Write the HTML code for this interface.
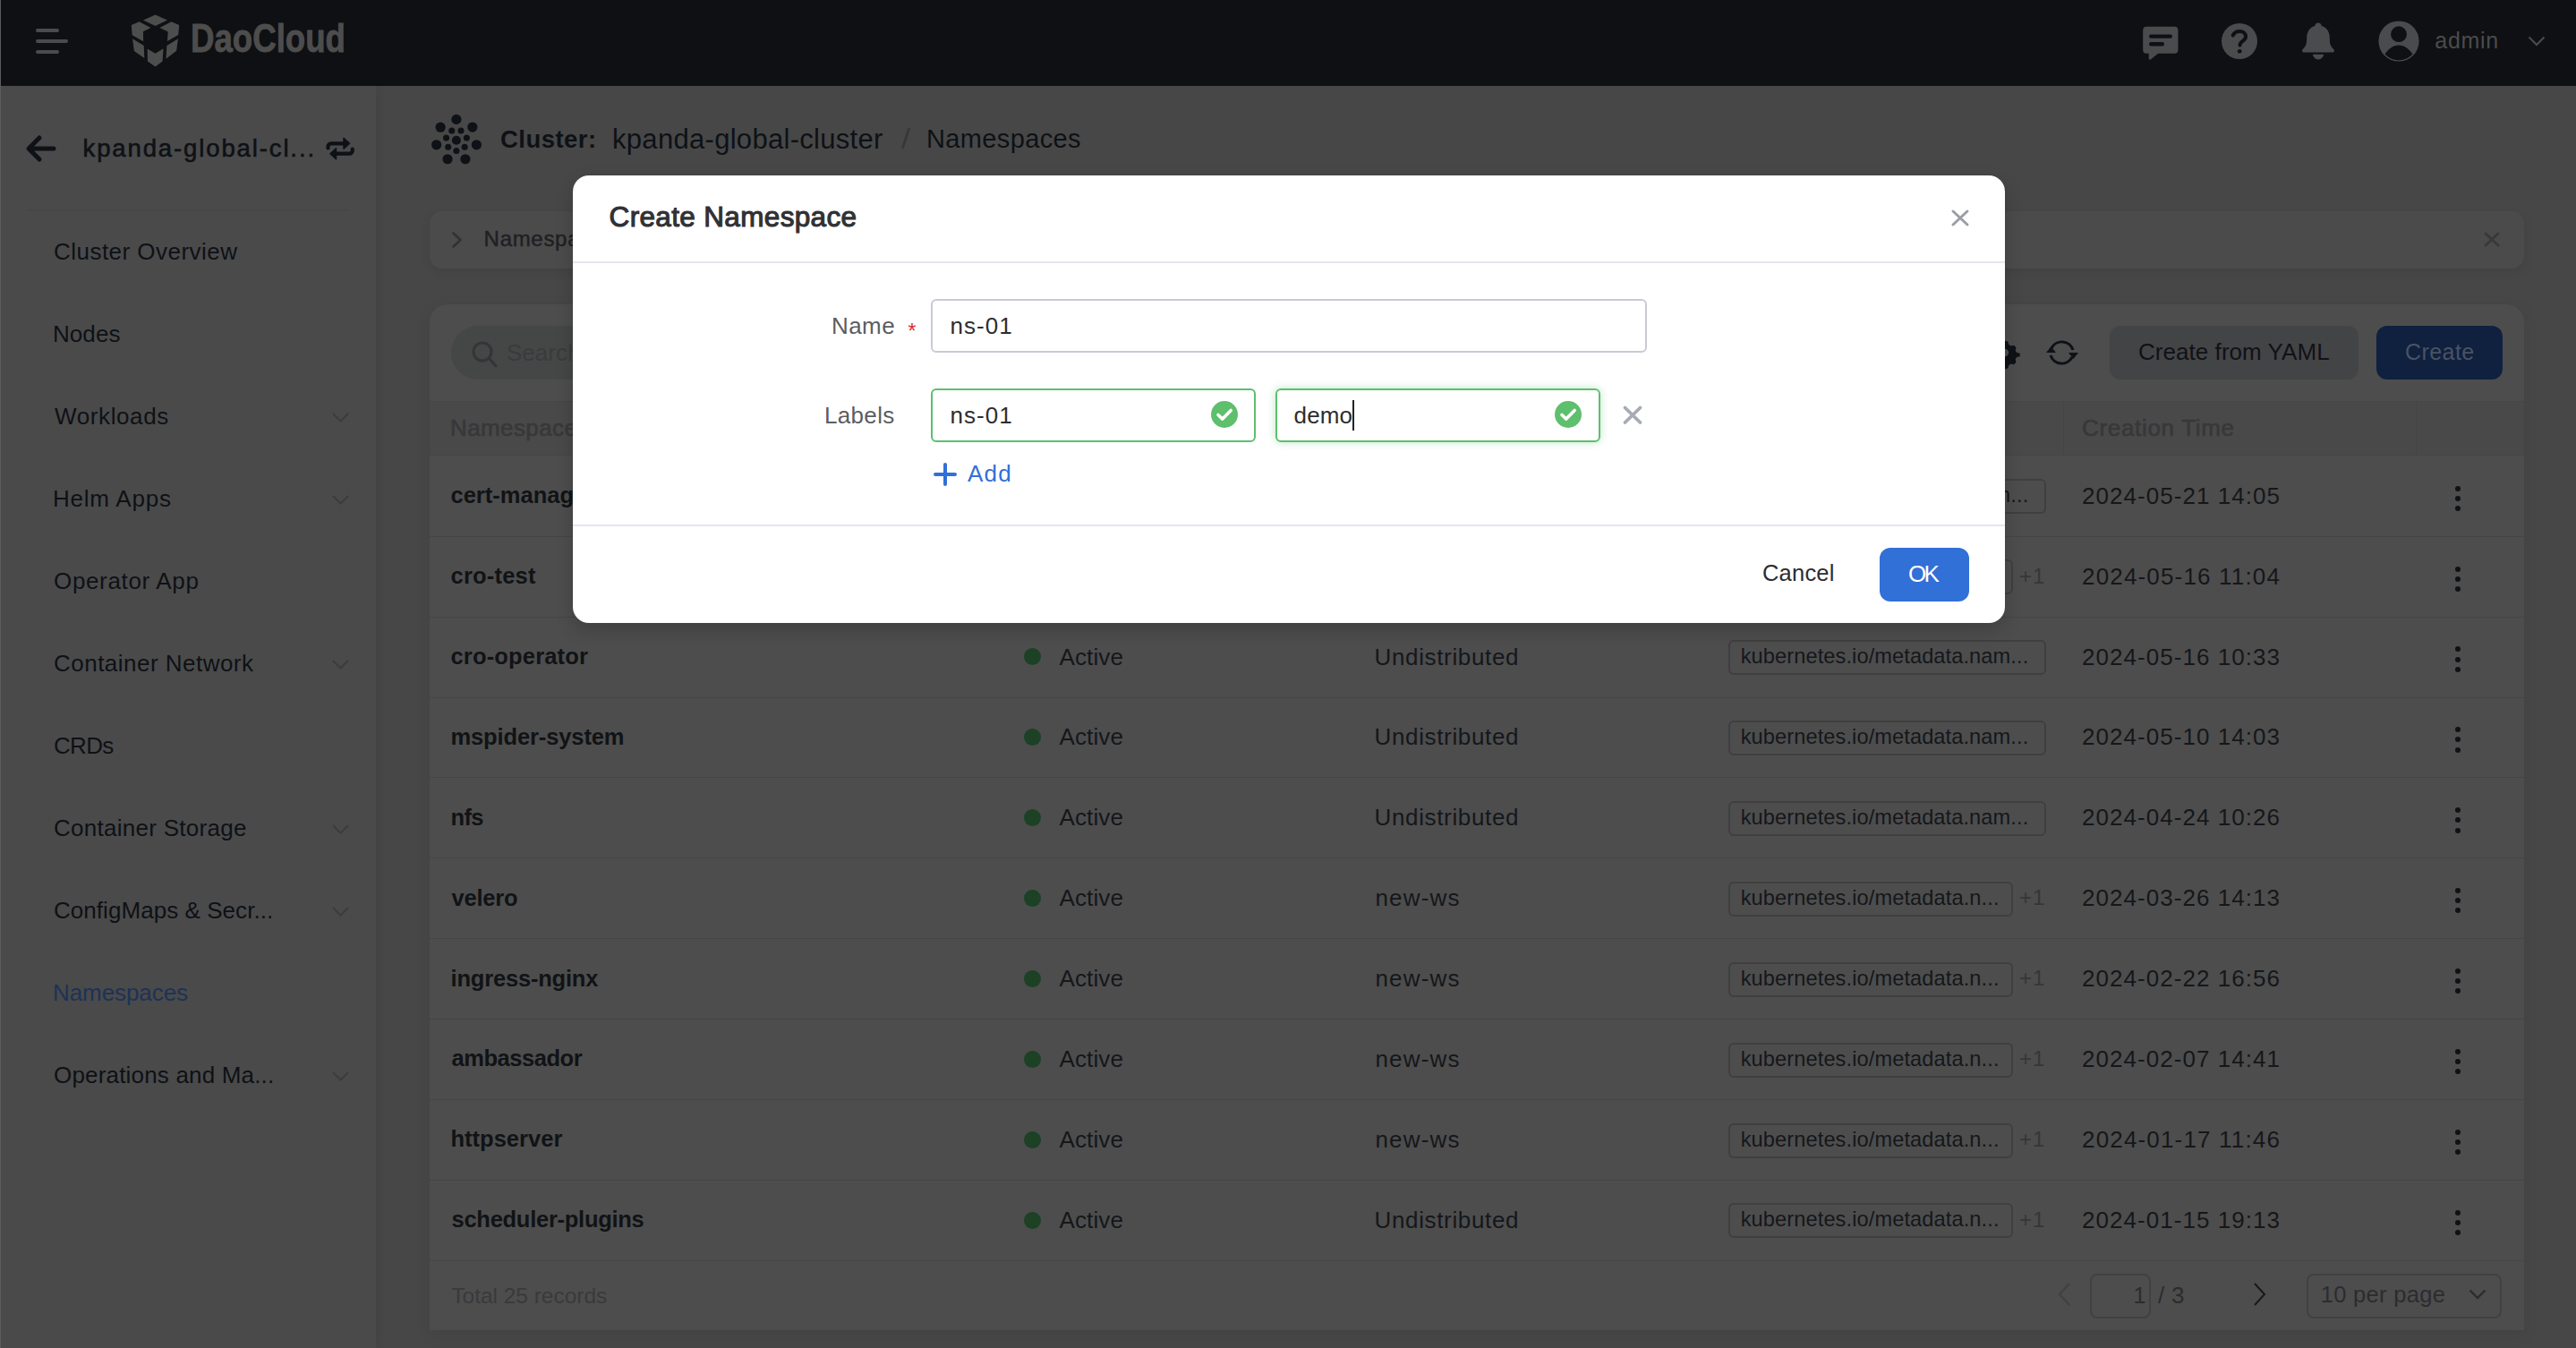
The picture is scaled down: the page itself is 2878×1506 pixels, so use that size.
<!DOCTYPE html>
<html><head><meta charset="utf-8"><style>
html,body{margin:0;padding:0}
body{width:2878px;height:1506px;overflow:hidden;position:relative;font-family:"Liberation Sans", sans-serif;background:#474747}
.a{position:absolute}
.t{position:absolute;white-space:nowrap;line-height:1}
svg{overflow:visible}
</style></head><body>
<div class="a" style="left:0px;top:0px;width:2878px;height:96px;background:#0f1013"></div>
<div class="a" style="left:40px;top:32px;width:26px;height:4px;background:#4a4b4d;border-radius:2px"></div>
<div class="a" style="left:40px;top:44px;width:36px;height:4px;background:#4a4b4d;border-radius:2px"></div>
<div class="a" style="left:40px;top:56px;width:26px;height:4px;background:#4a4b4d;border-radius:2px"></div>
<svg class="a" style="left:140px;top:10px" width="70" height="70" viewBox="0 0 1348 1348"><g fill="#4d4d4d">
<polygon points="385,240 645,125 905,240 645,365"/>
<polygon points="130,345 300,275 548,402 385,488 388,700 148,565"/>
<polygon points="1160,345 990,275 740,402 918,492 905,695 1140,560"/>
<polygon points="155,640 400,790 410,1060 190,905"/>
<polygon points="1135,640 893,790 875,1072 1100,900"/>
<polygon points="475,855 645,960 820,850 800,1125 645,1240 480,1125"/>
</g></svg>
<div class="t" style="left:213.3px;top:21.8px;font-size:43.5px;font-weight:700;color:#4d4d4d;letter-spacing:0.00px;transform:scaleX(0.842);transform-origin:0 0;-webkit-text-stroke:0.9px #4d4d4d">DaoCloud</div>
<svg class="a" style="left:2394px;top:29px" width="40" height="38" viewBox="0 0 40 38"><path fill="#4a4b4d" d="M4.2 0.8h31.2a4 4 0 0 1 4 4v22a4 4 0 0 1-4 4H17.2l-8.6 6.6c-.8.6-1.9.1-1.9-.9V30.8H4.2a4 4 0 0 1-4-4v-22a4 4 0 0 1 4-4z"/>
<rect x="7" y="9.4" width="26" height="4.4" rx="2.2" fill="#0f1013"/><rect x="7" y="18" width="17" height="4.5" rx="2.25" fill="#0f1013"/></svg>
<svg class="a" style="left:2482px;top:25.5px" width="40" height="40" viewBox="0 0 40 40"><circle cx="20" cy="20" r="20" fill="#4a4b4d"/>
<path d="M12.6 13.5c1.6-3.2 4.3-4.6 7.6-4.6 3.9 0 6.8 2.4 6.8 5.8 0 2.6-1.6 4-3.4 5.2-1.8 1.2-3.1 2.3-3.1 4.7" fill="none" stroke="#0f1013" stroke-width="4" stroke-linecap="round"/>
<circle cx="20.2" cy="31.3" r="2.4" fill="#0f1013"/></svg>
<svg class="a" style="left:2570px;top:25px" width="40" height="43" viewBox="0 0 40 43"><path fill="#4a4b4d" d="M20 0.4c2.1 0 3.5 1.6 3.8 3.6 5.8 1.6 9 6.8 9 13.2 0 6.2.6 8.8 4 12.2 1.9 1.9 1.3 4.2-1 4.2H4.2c-2.3 0-2.9-2.3-1-4.2 3.4-3.4 4-6 4-12.2 0-6.4 3.2-11.6 9-13.2.3-2 1.7-3.6 3.8-3.6z"/>
<path fill="#4a4b4d" d="M13.8 35.8h12.4c-.6 3.5-3.3 5.6-6.2 5.6s-5.6-2.1-6.2-5.6z"/></svg>
<svg class="a" style="left:2657px;top:23px" width="46" height="46" viewBox="0 0 46 46"><circle cx="23" cy="23" r="22.6" fill="#4a4b4d"/>
<circle cx="23" cy="15.2" r="8.9" fill="#0f1013"/>
<path fill="#0f1013" d="M7.6 37.5c3.8-6 9.4-10 15.4-10s11.6 4 15.4 10c-3.8 4.2-9.3 6.8-15.4 6.8s-11.6-2.6-15.4-6.8z"/></svg>
<div class="t" style="left:2720.3px;top:32.9px;font-size:25px;font-weight:400;color:#4a4b4d;letter-spacing:0.70px;">admin</div>
<svg class="a" style="left:2824px;top:40px" width="20" height="12" viewBox="0 0 20 12"><path d="M1.5 1.5l8.5 8.5 8.5-8.5" fill="none" stroke="#4a4b4d" stroke-width="2"/></svg>
<div class="a" style="left:420px;top:96px;width:2458px;height:1410px;background:#474747"></div>
<div class="a" style="left:0px;top:96px;width:420px;height:1410px;background:#4a4a4a;box-shadow:2px 0 10px rgba(0,0,0,0.07)"></div>
<svg class="a" style="left:28px;top:150px" width="36" height="32" viewBox="0 0 36 32"><path d="M32 16H5M16 4L4 16l12 12" fill="none" stroke="#0e1116" stroke-width="5" stroke-linecap="round" stroke-linejoin="round"/></svg>
<div class="t" style="left:92.5px;top:151.7px;font-size:27.5px;font-weight:400;color:#0e1116;letter-spacing:1.88px;-webkit-text-stroke:0.6px #0e1116">kpanda-global-cl...</div>
<svg class="a" style="left:360px;top:148px" width="40" height="36" viewBox="0 0 40 36"><g fill="none" stroke="#0e1116" stroke-width="4.2" stroke-linecap="round" stroke-linejoin="round"><path d="M6.5 17.5V15.8a3.5 3.5 0 0 1 3.5-3.5H25"/><path d="M33.8 18.5v1.7a3.5 3.5 0 0 1-3.5 3.5H15"/></g><g fill="#0e1116" stroke="#0e1116" stroke-width="1.5" stroke-linejoin="round"><polygon points="24,6.3 30.5,12.3 24,18.3"/><polygon points="15.5,17.7 9,23.7 15.5,29.7"/></g></svg>
<div class="a" style="left:30px;top:234px;width:360px;height:2px;background:#464646"></div>
<div class="t" style="left:60.0px;top:268.0px;font-size:26px;font-weight:400;color:#0e1116;letter-spacing:0.47px;">Cluster Overview</div>
<div class="t" style="left:59.0px;top:360.0px;font-size:26px;font-weight:400;color:#0e1116;letter-spacing:0.06px;">Nodes</div>
<div class="t" style="left:61.0px;top:452.0px;font-size:26px;font-weight:400;color:#0e1116;letter-spacing:0.61px;">Workloads</div>
<svg class="a" style="left:371px;top:461px" width="19" height="11" viewBox="0 0 19 11"><path d="M1 1l8.5 8.5L18 1" fill="none" stroke="#3b3c3e" stroke-width="2"/></svg>
<div class="t" style="left:59.0px;top:544.0px;font-size:26px;font-weight:400;color:#0e1116;letter-spacing:0.78px;">Helm Apps</div>
<svg class="a" style="left:371px;top:553px" width="19" height="11" viewBox="0 0 19 11"><path d="M1 1l8.5 8.5L18 1" fill="none" stroke="#3b3c3e" stroke-width="2"/></svg>
<div class="t" style="left:60.0px;top:636.0px;font-size:26px;font-weight:400;color:#0e1116;letter-spacing:0.66px;">Operator App</div>
<div class="t" style="left:60.0px;top:728.0px;font-size:26px;font-weight:400;color:#0e1116;letter-spacing:0.48px;">Container Network</div>
<svg class="a" style="left:371px;top:737px" width="19" height="11" viewBox="0 0 19 11"><path d="M1 1l8.5 8.5L18 1" fill="none" stroke="#3b3c3e" stroke-width="2"/></svg>
<div class="t" style="left:60.0px;top:820.0px;font-size:26px;font-weight:400;color:#0e1116;letter-spacing:-0.71px;">CRDs</div>
<div class="t" style="left:60.0px;top:912.0px;font-size:26px;font-weight:400;color:#0e1116;letter-spacing:0.27px;">Container Storage</div>
<svg class="a" style="left:371px;top:921px" width="19" height="11" viewBox="0 0 19 11"><path d="M1 1l8.5 8.5L18 1" fill="none" stroke="#3b3c3e" stroke-width="2"/></svg>
<div class="t" style="left:60.0px;top:1004.0px;font-size:26px;font-weight:400;color:#0e1116;letter-spacing:0.05px;">ConfigMaps &amp; Secr...</div>
<svg class="a" style="left:371px;top:1013px" width="19" height="11" viewBox="0 0 19 11"><path d="M1 1l8.5 8.5L18 1" fill="none" stroke="#3b3c3e" stroke-width="2"/></svg>
<div class="t" style="left:59.0px;top:1096.0px;font-size:26px;font-weight:400;color:#1d3257;letter-spacing:-0.08px;">Namespaces</div>
<div class="t" style="left:60.0px;top:1188.0px;font-size:26px;font-weight:400;color:#0e1116;letter-spacing:0.18px;">Operations and Ma...</div>
<svg class="a" style="left:371px;top:1197px" width="19" height="11" viewBox="0 0 19 11"><path d="M1 1l8.5 8.5L18 1" fill="none" stroke="#3b3c3e" stroke-width="2"/></svg>
<div class="a" style="left:0px;top:0px;width:1px;height:1506px;background:#5c5c5c"></div>
<svg class="a" style="left:475px;top:120px" width="70" height="70" viewBox="0 0 1348 1348"><g fill="#0e1116"><circle cx="672" cy="258" r="108"/><circle cx="330" cy="428" r="108"/><circle cx="1018" cy="425" r="108"/><circle cx="243" cy="805" r="108"/><circle cx="1105" cy="805" r="108"/><circle cx="482" cy="1112" r="108"/><circle cx="865" cy="1112" r="108"/><circle cx="672" cy="708" r="97"/><circle cx="573" cy="500" r="68"/><circle cx="770" cy="500" r="68"/><circle cx="453" cy="657" r="68"/><circle cx="893" cy="657" r="68"/><circle cx="495" cy="852" r="68"/><circle cx="850" cy="852" r="68"/><circle cx="672" cy="935" r="68"/></g></svg>
<div class="t" style="left:559.0px;top:142.4px;font-size:27.5px;font-weight:700;color:#0e1116;letter-spacing:0.46px;">Cluster:</div>
<div class="t" style="left:684.0px;top:139.5px;font-size:31px;font-weight:400;color:#0e1116;letter-spacing:0.30px;">kpanda-global-cluster</div>
<svg class="a" style="left:1005px;top:141px" width="14" height="27" viewBox="0 0 14 27"><path d="M3.5 24L10.5 3" stroke="#363739" stroke-width="2.6" stroke-linecap="round"/></svg>
<div class="t" style="left:1035.0px;top:141.2px;font-size:29px;font-weight:400;color:#0e1116;letter-spacing:0.36px;">Namespaces</div>
<div class="a" style="left:480px;top:236px;width:2340px;height:64px;background:#4b4b4b;border-radius:14px;box-shadow:0 4px 12px rgba(0,0,0,0.08)"></div>
<svg class="a" style="left:504px;top:258px" width="14" height="20" viewBox="0 0 14 20"><path d="M2.5 2.5l8 7.5-8 7.5" fill="none" stroke="#303236" stroke-width="2.6" stroke-linecap="round" stroke-linejoin="round"/></svg>
<div class="t" style="left:540.6px;top:254.7px;font-size:24px;font-weight:400;color:#1f2023;letter-spacing:0.70px;-webkit-text-stroke:0.45px #1f2023">Namespaces</div>
<svg class="a" style="left:2775px;top:259px" width="18" height="17" viewBox="0 0 18 17"><path d="M2 2l14 13M16 2L2 15" fill="none" stroke="#38393c" stroke-width="3" stroke-linecap="round"/></svg>
<div class="a" style="left:480px;top:340px;width:2340px;height:1146px;background:#4d4d4d;border-radius:20px 20px 0 0;box-shadow:0 4px 18px rgba(0,0,0,0.08)"></div>
<div class="a" style="left:504px;top:364px;width:600px;height:60px;background:#454646;border-radius:30px"></div>
<svg class="a" style="left:525.5px;top:379.5px" width="28" height="30" viewBox="0 0 28 30"><circle cx="13" cy="13" r="10" fill="none" stroke="#343538" stroke-width="3"/><path d="M21 21l7 8" stroke="#343538" stroke-width="3" stroke-linecap="round"/></svg>
<div class="t" style="left:566.0px;top:381.0px;font-size:26px;font-weight:400;color:#3a3b3d;letter-spacing:0.00px;">Search</div>
<svg class="a" style="left:2225px;top:379px" width="30" height="30" viewBox="0 0 36 36"><path fill="#0e1116" d="M18 2l4 1 1 4 3 2 4-1 3 3-1 4 2 3 4 1v4l-4 1-2 3 1 4-3 3-4-1-3 2-1 4-4 1-4-1-1-4-3-2-4 1-3-3 1-4-2-3-4-1v-4l4-1 2-3-1-4 3-3 4 1 3-2 1-4z"/><circle cx="18" cy="18" r="5" fill="#4d4d4d"/></svg>
<svg class="a" style="left:2285px;top:378px" width="38" height="32" viewBox="0 0 38 32"><g fill="none" stroke="#0e1116" stroke-width="3"><path d="M31 13A13 13 0 0 0 7 11"/><path d="M6 19a13 13 0 0 0 24 2"/></g><path fill="#0e1116" d="M1 16h11l-5.5-7z M26 16h11l-5.5 7z"/></svg>
<div class="a" style="left:2357px;top:364px;width:278px;height:60px;background:#434446;border-radius:12px"></div>
<div class="t" style="left:2389.0px;top:380.2px;font-size:26px;font-weight:400;color:#101215;letter-spacing:0.05px;">Create from YAML</div>
<div class="a" style="left:2655px;top:364px;width:141px;height:60px;background:#10203f;border-radius:12px"></div>
<div class="t" style="left:2687.0px;top:381.0px;font-size:25px;font-weight:400;color:#4a5263;letter-spacing:0.43px;">Create</div>
<div class="a" style="left:480px;top:448px;width:2340px;height:1px;background:#444546"></div>
<div class="a" style="left:480px;top:449px;width:2340px;height:60px;background:#494949"></div>
<div class="a" style="left:480px;top:508px;width:2340px;height:1px;background:#444546"></div>
<div class="a" style="left:2305px;top:449px;width:1px;height:59px;background:#444546"></div>
<div class="a" style="left:2699px;top:449px;width:1px;height:59px;background:#444546"></div>
<div class="t" style="left:503.0px;top:465.3px;font-size:26px;font-weight:400;color:#37383a;letter-spacing:0.40px;-webkit-text-stroke:0.7px #37383a">Namespace</div>
<div class="t" style="left:2326.0px;top:465.3px;font-size:26px;font-weight:400;color:#37383a;letter-spacing:0.68px;-webkit-text-stroke:0.7px #37383a">Creation Time</div>
<div class="a" style="left:480px;top:599px;width:2340px;height:1px;background:#444546"></div>
<div class="t" style="left:503.5px;top:541.1px;font-size:25.5px;font-weight:700;color:#111316;letter-spacing:0.00px;">cert-manager</div>
<div class="a" style="left:1144px;top:545px;width:19px;height:19px;background:#1c4125;border-radius:50%"></div>
<div class="t" style="left:1183.5px;top:540.6px;font-size:26px;font-weight:400;color:#15171a;letter-spacing:0.11px;">Active</div>
<div class="t" style="left:1535.5px;top:540.6px;font-size:26px;font-weight:400;color:#15171a;letter-spacing:0.65px;">Undistributed</div>
<div class="a" style="left:1931px;top:535px;width:355px;height:39px;border:2px solid #3f3f3f;border-radius:6px;box-sizing:border-box"></div>
<div class="t" style="left:1944.7px;top:542.2px;font-size:23.6px;font-weight:400;color:#15171a;letter-spacing:0.10px;">kubernetes.io/metadata.nam...</div>
<div class="t" style="left:2326.0px;top:540.6px;font-size:26px;font-weight:400;color:#15171a;letter-spacing:1.05px;">2024-05-21 14:05</div>
<div class="a" style="left:2743px;top:543px;width:6px;height:6px;background:#0e1116;border-radius:50%"></div>
<div class="a" style="left:2743px;top:554px;width:6px;height:6px;background:#0e1116;border-radius:50%"></div>
<div class="a" style="left:2743px;top:565px;width:6px;height:6px;background:#0e1116;border-radius:50%"></div>
<div class="a" style="left:480px;top:689px;width:2340px;height:1px;background:#444546"></div>
<div class="t" style="left:503.5px;top:631.0px;font-size:25.5px;font-weight:700;color:#111316;letter-spacing:0.21px;">cro-test</div>
<div class="a" style="left:1144px;top:635px;width:19px;height:19px;background:#1c4125;border-radius:50%"></div>
<div class="t" style="left:1183.5px;top:630.6px;font-size:26px;font-weight:400;color:#15171a;letter-spacing:0.11px;">Active</div>
<div class="t" style="left:1536.5px;top:630.6px;font-size:26px;font-weight:400;color:#15171a;letter-spacing:1.15px;">new-ws</div>
<div class="a" style="left:1931px;top:625px;width:318px;height:39px;border:2px solid #3f3f3f;border-radius:6px;box-sizing:border-box"></div>
<div class="t" style="left:1944.7px;top:632.1px;font-size:23.6px;font-weight:400;color:#15171a;letter-spacing:0.11px;">kubernetes.io/metadata.n...</div>
<div class="t" style="left:2256.0px;top:631.7px;font-size:24px;font-weight:400;color:#353638;letter-spacing:0.98px;">+1</div>
<div class="t" style="left:2326.0px;top:630.6px;font-size:26px;font-weight:400;color:#15171a;letter-spacing:1.17px;">2024-05-16 11:04</div>
<div class="a" style="left:2743px;top:633px;width:6px;height:6px;background:#0e1116;border-radius:50%"></div>
<div class="a" style="left:2743px;top:644px;width:6px;height:6px;background:#0e1116;border-radius:50%"></div>
<div class="a" style="left:2743px;top:655px;width:6px;height:6px;background:#0e1116;border-radius:50%"></div>
<div class="a" style="left:480px;top:779px;width:2340px;height:1px;background:#444546"></div>
<div class="t" style="left:503.5px;top:720.9px;font-size:25.5px;font-weight:700;color:#111316;letter-spacing:0.16px;">cro-operator</div>
<div class="a" style="left:1144px;top:724px;width:19px;height:19px;background:#1c4125;border-radius:50%"></div>
<div class="t" style="left:1183.5px;top:720.5px;font-size:26px;font-weight:400;color:#15171a;letter-spacing:0.11px;">Active</div>
<div class="t" style="left:1535.5px;top:720.5px;font-size:26px;font-weight:400;color:#15171a;letter-spacing:0.65px;">Undistributed</div>
<div class="a" style="left:1931px;top:715px;width:355px;height:39px;border:2px solid #3f3f3f;border-radius:6px;box-sizing:border-box"></div>
<div class="t" style="left:1944.7px;top:722.0px;font-size:23.6px;font-weight:400;color:#15171a;letter-spacing:0.10px;">kubernetes.io/metadata.nam...</div>
<div class="t" style="left:2326.0px;top:720.5px;font-size:26px;font-weight:400;color:#15171a;letter-spacing:1.05px;">2024-05-16 10:33</div>
<div class="a" style="left:2743px;top:722px;width:6px;height:6px;background:#0e1116;border-radius:50%"></div>
<div class="a" style="left:2743px;top:734px;width:6px;height:6px;background:#0e1116;border-radius:50%"></div>
<div class="a" style="left:2743px;top:745px;width:6px;height:6px;background:#0e1116;border-radius:50%"></div>
<div class="a" style="left:480px;top:868px;width:2340px;height:1px;background:#444546"></div>
<div class="t" style="left:503.5px;top:810.8px;font-size:25.5px;font-weight:700;color:#111316;letter-spacing:-0.12px;">mspider-system</div>
<div class="a" style="left:1144px;top:814px;width:19px;height:19px;background:#1c4125;border-radius:50%"></div>
<div class="t" style="left:1183.5px;top:810.4px;font-size:26px;font-weight:400;color:#15171a;letter-spacing:0.11px;">Active</div>
<div class="t" style="left:1535.5px;top:810.4px;font-size:26px;font-weight:400;color:#15171a;letter-spacing:0.65px;">Undistributed</div>
<div class="a" style="left:1931px;top:805px;width:355px;height:39px;border:2px solid #3f3f3f;border-radius:6px;box-sizing:border-box"></div>
<div class="t" style="left:1944.7px;top:811.9px;font-size:23.6px;font-weight:400;color:#15171a;letter-spacing:0.10px;">kubernetes.io/metadata.nam...</div>
<div class="t" style="left:2326.0px;top:810.4px;font-size:26px;font-weight:400;color:#15171a;letter-spacing:1.05px;">2024-05-10 14:03</div>
<div class="a" style="left:2743px;top:812px;width:6px;height:6px;background:#0e1116;border-radius:50%"></div>
<div class="a" style="left:2743px;top:823px;width:6px;height:6px;background:#0e1116;border-radius:50%"></div>
<div class="a" style="left:2743px;top:835px;width:6px;height:6px;background:#0e1116;border-radius:50%"></div>
<div class="a" style="left:480px;top:958px;width:2340px;height:1px;background:#444546"></div>
<div class="t" style="left:503.5px;top:900.7px;font-size:25.5px;font-weight:700;color:#111316;letter-spacing:-0.63px;">nfs</div>
<div class="a" style="left:1144px;top:904px;width:19px;height:19px;background:#1c4125;border-radius:50%"></div>
<div class="t" style="left:1183.5px;top:900.3px;font-size:26px;font-weight:400;color:#15171a;letter-spacing:0.11px;">Active</div>
<div class="t" style="left:1535.5px;top:900.3px;font-size:26px;font-weight:400;color:#15171a;letter-spacing:0.65px;">Undistributed</div>
<div class="a" style="left:1931px;top:895px;width:355px;height:39px;border:2px solid #3f3f3f;border-radius:6px;box-sizing:border-box"></div>
<div class="t" style="left:1944.7px;top:901.8px;font-size:23.6px;font-weight:400;color:#15171a;letter-spacing:0.10px;">kubernetes.io/metadata.nam...</div>
<div class="t" style="left:2326.0px;top:900.3px;font-size:26px;font-weight:400;color:#15171a;letter-spacing:1.05px;">2024-04-24 10:26</div>
<div class="a" style="left:2743px;top:902px;width:6px;height:6px;background:#0e1116;border-radius:50%"></div>
<div class="a" style="left:2743px;top:913px;width:6px;height:6px;background:#0e1116;border-radius:50%"></div>
<div class="a" style="left:2743px;top:925px;width:6px;height:6px;background:#0e1116;border-radius:50%"></div>
<div class="a" style="left:480px;top:1048px;width:2340px;height:1px;background:#444546"></div>
<div class="t" style="left:504.5px;top:990.6px;font-size:25.5px;font-weight:700;color:#111316;letter-spacing:-0.21px;">velero</div>
<div class="a" style="left:1144px;top:994px;width:19px;height:19px;background:#1c4125;border-radius:50%"></div>
<div class="t" style="left:1183.5px;top:990.2px;font-size:26px;font-weight:400;color:#15171a;letter-spacing:0.11px;">Active</div>
<div class="t" style="left:1536.5px;top:990.2px;font-size:26px;font-weight:400;color:#15171a;letter-spacing:1.15px;">new-ws</div>
<div class="a" style="left:1931px;top:985px;width:318px;height:39px;border:2px solid #3f3f3f;border-radius:6px;box-sizing:border-box"></div>
<div class="t" style="left:1944.7px;top:991.7px;font-size:23.6px;font-weight:400;color:#15171a;letter-spacing:0.11px;">kubernetes.io/metadata.n...</div>
<div class="t" style="left:2256.0px;top:991.4px;font-size:24px;font-weight:400;color:#353638;letter-spacing:0.98px;">+1</div>
<div class="t" style="left:2326.0px;top:990.2px;font-size:26px;font-weight:400;color:#15171a;letter-spacing:1.05px;">2024-03-26 14:13</div>
<div class="a" style="left:2743px;top:992px;width:6px;height:6px;background:#0e1116;border-radius:50%"></div>
<div class="a" style="left:2743px;top:1003px;width:6px;height:6px;background:#0e1116;border-radius:50%"></div>
<div class="a" style="left:2743px;top:1014px;width:6px;height:6px;background:#0e1116;border-radius:50%"></div>
<div class="a" style="left:480px;top:1138px;width:2340px;height:1px;background:#444546"></div>
<div class="t" style="left:503.5px;top:1080.5px;font-size:25.5px;font-weight:700;color:#111316;letter-spacing:-0.19px;">ingress-nginx</div>
<div class="a" style="left:1144px;top:1084px;width:19px;height:19px;background:#1c4125;border-radius:50%"></div>
<div class="t" style="left:1183.5px;top:1080.1px;font-size:26px;font-weight:400;color:#15171a;letter-spacing:0.11px;">Active</div>
<div class="t" style="left:1536.5px;top:1080.1px;font-size:26px;font-weight:400;color:#15171a;letter-spacing:1.15px;">new-ws</div>
<div class="a" style="left:1931px;top:1075px;width:318px;height:39px;border:2px solid #3f3f3f;border-radius:6px;box-sizing:border-box"></div>
<div class="t" style="left:1944.7px;top:1081.6px;font-size:23.6px;font-weight:400;color:#15171a;letter-spacing:0.11px;">kubernetes.io/metadata.n...</div>
<div class="t" style="left:2256.0px;top:1081.3px;font-size:24px;font-weight:400;color:#353638;letter-spacing:0.98px;">+1</div>
<div class="t" style="left:2326.0px;top:1080.1px;font-size:26px;font-weight:400;color:#15171a;letter-spacing:1.05px;">2024-02-22 16:56</div>
<div class="a" style="left:2743px;top:1082px;width:6px;height:6px;background:#0e1116;border-radius:50%"></div>
<div class="a" style="left:2743px;top:1093px;width:6px;height:6px;background:#0e1116;border-radius:50%"></div>
<div class="a" style="left:2743px;top:1104px;width:6px;height:6px;background:#0e1116;border-radius:50%"></div>
<div class="a" style="left:480px;top:1228px;width:2340px;height:1px;background:#444546"></div>
<div class="t" style="left:504.5px;top:1170.4px;font-size:25.5px;font-weight:700;color:#111316;letter-spacing:-0.46px;">ambassador</div>
<div class="a" style="left:1144px;top:1174px;width:19px;height:19px;background:#1c4125;border-radius:50%"></div>
<div class="t" style="left:1183.5px;top:1170.0px;font-size:26px;font-weight:400;color:#15171a;letter-spacing:0.11px;">Active</div>
<div class="t" style="left:1536.5px;top:1170.0px;font-size:26px;font-weight:400;color:#15171a;letter-spacing:1.15px;">new-ws</div>
<div class="a" style="left:1931px;top:1165px;width:318px;height:39px;border:2px solid #3f3f3f;border-radius:6px;box-sizing:border-box"></div>
<div class="t" style="left:1944.7px;top:1171.5px;font-size:23.6px;font-weight:400;color:#15171a;letter-spacing:0.11px;">kubernetes.io/metadata.n...</div>
<div class="t" style="left:2256.0px;top:1171.2px;font-size:24px;font-weight:400;color:#353638;letter-spacing:0.98px;">+1</div>
<div class="t" style="left:2326.0px;top:1170.0px;font-size:26px;font-weight:400;color:#15171a;letter-spacing:1.05px;">2024-02-07 14:41</div>
<div class="a" style="left:2743px;top:1172px;width:6px;height:6px;background:#0e1116;border-radius:50%"></div>
<div class="a" style="left:2743px;top:1183px;width:6px;height:6px;background:#0e1116;border-radius:50%"></div>
<div class="a" style="left:2743px;top:1194px;width:6px;height:6px;background:#0e1116;border-radius:50%"></div>
<div class="a" style="left:480px;top:1318px;width:2340px;height:1px;background:#444546"></div>
<div class="t" style="left:503.5px;top:1260.3px;font-size:25.5px;font-weight:700;color:#111316;letter-spacing:0.01px;">httpserver</div>
<div class="a" style="left:1144px;top:1264px;width:19px;height:19px;background:#1c4125;border-radius:50%"></div>
<div class="t" style="left:1183.5px;top:1259.9px;font-size:26px;font-weight:400;color:#15171a;letter-spacing:0.11px;">Active</div>
<div class="t" style="left:1536.5px;top:1259.9px;font-size:26px;font-weight:400;color:#15171a;letter-spacing:1.15px;">new-ws</div>
<div class="a" style="left:1931px;top:1255px;width:318px;height:39px;border:2px solid #3f3f3f;border-radius:6px;box-sizing:border-box"></div>
<div class="t" style="left:1944.7px;top:1261.5px;font-size:23.6px;font-weight:400;color:#15171a;letter-spacing:0.11px;">kubernetes.io/metadata.n...</div>
<div class="t" style="left:2256.0px;top:1261.1px;font-size:24px;font-weight:400;color:#353638;letter-spacing:0.98px;">+1</div>
<div class="t" style="left:2326.0px;top:1259.9px;font-size:26px;font-weight:400;color:#15171a;letter-spacing:1.17px;">2024-01-17 11:46</div>
<div class="a" style="left:2743px;top:1262px;width:6px;height:6px;background:#0e1116;border-radius:50%"></div>
<div class="a" style="left:2743px;top:1273px;width:6px;height:6px;background:#0e1116;border-radius:50%"></div>
<div class="a" style="left:2743px;top:1284px;width:6px;height:6px;background:#0e1116;border-radius:50%"></div>
<div class="a" style="left:480px;top:1408px;width:2340px;height:1px;background:#444546"></div>
<div class="t" style="left:504.5px;top:1350.3px;font-size:25.5px;font-weight:700;color:#111316;letter-spacing:-0.27px;">scheduler-plugins</div>
<div class="a" style="left:1144px;top:1354px;width:19px;height:19px;background:#1c4125;border-radius:50%"></div>
<div class="t" style="left:1183.5px;top:1349.8px;font-size:26px;font-weight:400;color:#15171a;letter-spacing:0.11px;">Active</div>
<div class="t" style="left:1535.5px;top:1349.8px;font-size:26px;font-weight:400;color:#15171a;letter-spacing:0.65px;">Undistributed</div>
<div class="a" style="left:1931px;top:1344px;width:318px;height:39px;border:2px solid #3f3f3f;border-radius:6px;box-sizing:border-box"></div>
<div class="t" style="left:1944.7px;top:1351.4px;font-size:23.6px;font-weight:400;color:#15171a;letter-spacing:0.11px;">kubernetes.io/metadata.n...</div>
<div class="t" style="left:2256.0px;top:1351.0px;font-size:24px;font-weight:400;color:#353638;letter-spacing:0.98px;">+1</div>
<div class="t" style="left:2326.0px;top:1349.8px;font-size:26px;font-weight:400;color:#15171a;letter-spacing:1.05px;">2024-01-15 19:13</div>
<div class="a" style="left:2743px;top:1352px;width:6px;height:6px;background:#0e1116;border-radius:50%"></div>
<div class="a" style="left:2743px;top:1363px;width:6px;height:6px;background:#0e1116;border-radius:50%"></div>
<div class="a" style="left:2743px;top:1374px;width:6px;height:6px;background:#0e1116;border-radius:50%"></div>
<div class="t" style="left:504.4px;top:1436.3px;font-size:24.5px;font-weight:400;color:#393a3c;letter-spacing:-0.03px;">Total 25 records</div>
<svg class="a" style="left:2298px;top:1432px" width="18" height="28" viewBox="0 0 18 28"><path d="M14 2L3 14l11 12" fill="none" stroke="#3f4042" stroke-width="2"/></svg>
<div class="a" style="left:2335px;top:1423px;width:68px;height:50px;border:2px solid #404143;border-radius:8px;box-sizing:border-box"></div>
<div class="t" style="left:2383.5px;top:1434.8px;font-size:25px;font-weight:400;color:#2b2c2f;letter-spacing:0.00px;">1</div>
<div class="t" style="left:2411.0px;top:1434.0px;font-size:26px;font-weight:400;color:#2b2c2f;letter-spacing:0.28px;">/ 3</div>
<svg class="a" style="left:2515px;top:1432px" width="18" height="28" viewBox="0 0 18 28"><path d="M4 2l11 12L4 26" fill="none" stroke="#17191c" stroke-width="2"/></svg>
<div class="a" style="left:2577px;top:1423px;width:218px;height:50px;border:2px solid #404143;border-radius:8px;box-sizing:border-box"></div>
<div class="t" style="left:2592.7px;top:1434.4px;font-size:25.5px;font-weight:400;color:#2b2c2f;letter-spacing:0.32px;">10 per page</div>
<svg class="a" style="left:2758px;top:1440px" width="20" height="14" viewBox="0 0 20 14"><path d="M1.5 1.5l8.5 8.5 8.5-8.5" fill="none" stroke="#2b2c2f" stroke-width="2.4"/></svg>
<div class="a" style="left:640px;top:196px;width:1600px;height:500px;background:#fff;border-radius:18px;box-shadow:0 8px 20px rgba(0,0,0,0.18)"></div>
<div class="t" style="left:680.6px;top:227.1px;font-size:31.5px;font-weight:400;color:#303134;letter-spacing:0.34px;-webkit-text-stroke:1.1px #303134">Create Namespace</div>
<svg class="a" style="left:2180px;top:234px" width="20" height="19" viewBox="0 0 20 19"><path d="M2 2l16 15M18 2L2 17" fill="none" stroke="#9a9ea6" stroke-width="3" stroke-linecap="round"/></svg>
<div class="a" style="left:640px;top:292px;width:1600px;height:2px;background:#e4e6ee"></div>
<div class="t" style="left:929.0px;top:351.0px;font-size:26px;font-weight:400;color:#5b5d63;letter-spacing:0.44px;">Name</div>
<div class="t" style="left:1014.5px;top:358.5px;font-size:23px;font-weight:400;color:#e0312e;letter-spacing:0.00px;">*</div>
<div class="a" style="left:1040px;top:334px;width:800px;height:60px;border:2px solid #c8cbd5;border-radius:6px;box-sizing:border-box"></div>
<div class="t" style="left:1061.6px;top:351.0px;font-size:26px;font-weight:400;color:#2c2d30;letter-spacing:1.03px;">ns-01</div>
<div class="t" style="left:921.1px;top:451.0px;font-size:26px;font-weight:400;color:#5b5d63;letter-spacing:0.30px;">Labels</div>
<div class="a" style="left:1040px;top:434px;width:363px;height:60px;border:2px solid #5cbf6e;border-radius:6px;box-sizing:border-box"></div>
<div class="t" style="left:1061.6px;top:451.0px;font-size:26px;font-weight:400;color:#2c2d30;letter-spacing:1.03px;">ns-01</div>
<div class="a" style="left:1425px;top:434px;width:363px;height:60px;border:2px solid #5cbf6e;border-radius:6px;box-sizing:border-box;box-shadow:0 0 10px rgba(92,191,110,0.4)"></div>
<div class="t" style="left:1445.5px;top:451.0px;font-size:26px;font-weight:400;color:#2c2d30;letter-spacing:0.17px;">demo</div>
<div class="a" style="left:1511px;top:447px;width:2px;height:34px;background:#222"></div>
<svg class="a" style="left:1353px;top:448.3px" width="30" height="30" viewBox="0 0 30 30"><circle cx="15" cy="15" r="15" fill="#5ebf6c"/><path d="M8 15.5l4.8 4.6L22.2 10.5" fill="none" stroke="#fff" stroke-width="3.6" stroke-linecap="round" stroke-linejoin="round"/></svg>
<svg class="a" style="left:1737px;top:448.3px" width="30" height="30" viewBox="0 0 30 30"><circle cx="15" cy="15" r="15" fill="#5ebf6c"/><path d="M8 15.5l4.8 4.6L22.2 10.5" fill="none" stroke="#fff" stroke-width="3.6" stroke-linecap="round" stroke-linejoin="round"/></svg>
<svg class="a" style="left:1813px;top:453px" width="22" height="22" viewBox="0 0 22 22"><path d="M2.5 2.5l17 16.5M19.5 2.5l-17 16.5" fill="none" stroke="#a7abb3" stroke-width="3.8" stroke-linecap="round"/></svg>
<svg class="a" style="left:1042px;top:516px" width="28" height="28" viewBox="0 0 28 28"><path d="M14 3v22M3 14h22" fill="none" stroke="#3170d6" stroke-width="4" stroke-linecap="round"/></svg>
<div class="t" style="left:1081.0px;top:516.0px;font-size:26px;font-weight:400;color:#3170d6;letter-spacing:1.25px;">Add</div>
<div class="a" style="left:640px;top:586px;width:1600px;height:2px;background:#e4e6ee"></div>
<div class="t" style="left:1969.0px;top:628.4px;font-size:25.5px;font-weight:400;color:#2c2d30;letter-spacing:0.20px;">Cancel</div>
<div class="a" style="left:2100px;top:612px;width:100px;height:60px;background:#3170d6;border-radius:12px"></div>
<div class="t" style="left:2132.0px;top:628.0px;font-size:26px;font-weight:400;color:#ffffff;letter-spacing:-2.82px;">OK</div>
</body></html>
